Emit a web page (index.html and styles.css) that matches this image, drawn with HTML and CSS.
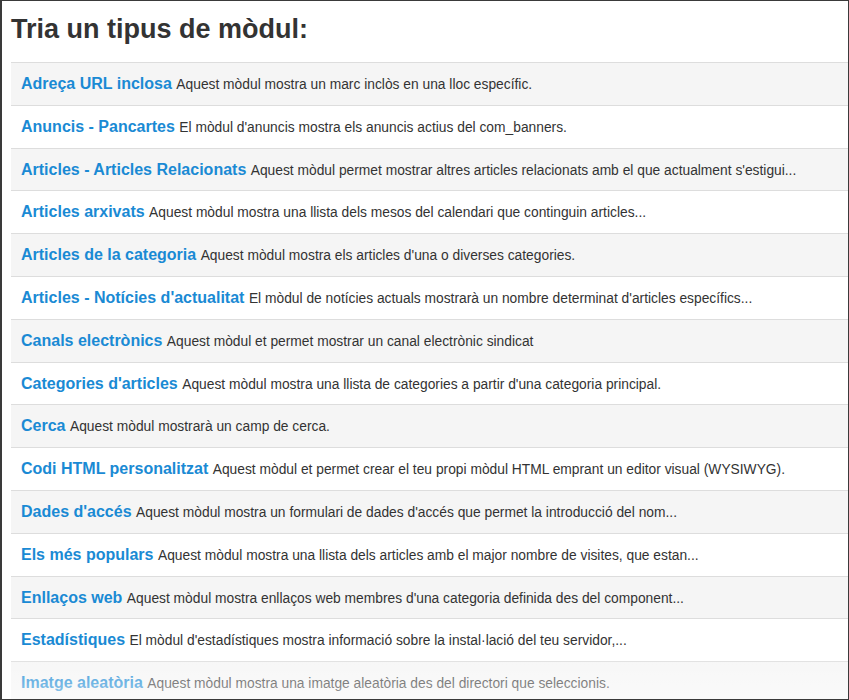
FILE: index.html
```html
<!DOCTYPE html>
<html lang="ca">
<head>
<meta charset="utf-8">
<title>Tria un tipus de mòdul</title>
<link rel="stylesheet" href="styles.css">
</head>
<body>
<div class="frame">
  <h2 class="title">Tria un tipus de mòdul:</h2>
  <ul class="modules">
    <li class="row"><a class="name" href="#">Adreça URL inclosa</a> <span class="desc">Aquest mòdul mostra un marc inclòs en una lloc específic.</span></li>
    <li class="row"><a class="name" href="#">Anuncis - Pancartes</a> <span class="desc">El mòdul d'anuncis mostra els anuncis actius del com_banners.</span></li>
    <li class="row"><a class="name" href="#">Articles - Articles Relacionats</a> <span class="desc">Aquest mòdul permet mostrar altres articles relacionats amb el que actualment s'estigui...</span></li>
    <li class="row"><a class="name" href="#">Articles arxivats</a> <span class="desc">Aquest mòdul mostra una llista dels mesos del calendari que continguin articles...</span></li>
    <li class="row"><a class="name" href="#">Articles de la categoria</a> <span class="desc">Aquest mòdul mostra els articles d'una o diverses categories.</span></li>
    <li class="row"><a class="name" href="#">Articles - Notícies d'actualitat</a> <span class="desc">El mòdul de notícies actuals mostrarà un nombre determinat d'articles específics...</span></li>
    <li class="row"><a class="name" href="#">Canals electrònics</a> <span class="desc">Aquest mòdul et permet mostrar un canal electrònic sindicat</span></li>
    <li class="row"><a class="name" href="#">Categories d'articles</a> <span class="desc">Aquest mòdul mostra una llista de categories a partir d'una categoria principal.</span></li>
    <li class="row"><a class="name" href="#">Cerca</a> <span class="desc">Aquest mòdul mostrarà un camp de cerca.</span></li>
    <li class="row"><a class="name" href="#">Codi HTML personalitzat</a> <span class="desc">Aquest mòdul et permet crear el teu propi mòdul HTML emprant un editor visual (WYSIWYG).</span></li>
    <li class="row"><a class="name" href="#">Dades d'accés</a> <span class="desc">Aquest mòdul mostra un formulari de dades d'accés que permet la introducció del nom...</span></li>
    <li class="row"><a class="name" href="#">Els més populars</a> <span class="desc">Aquest mòdul mostra una llista dels articles amb el major nombre de visites, que estan...</span></li>
    <li class="row"><a class="name" href="#">Enllaços web</a> <span class="desc">Aquest mòdul mostra enllaços web membres d'una categoria definida des del component...</span></li>
    <li class="row"><a class="name" href="#">Estadístiques</a> <span class="desc">El mòdul d'estadístiques mostra informació sobre la instal·lació del teu servidor,...</span></li>
    <li class="row"><a class="name" href="#">Imatge aleatòria</a> <span class="desc">Aquest mòdul mostra una imatge aleatòria des del directori que seleccionis.</span></li>
  </ul>
  <div class="fade"></div>
</div>
</body>
</html>
```
FILE: styles.css
```css
html, body {
  margin: 0;
  padding: 0;
  background: #fff;
}
body {
  font-family: "Liberation Sans", Arial, sans-serif;
  color: #333;
}
.frame {
  position: relative;
  box-sizing: border-box;
  width: 849px;
  height: 700px;
  border: 1px solid #3a3a3a;
  border-left-width: 2px;
  overflow: hidden;
  padding-left: 9px;
}
.title {
  margin: 13px 0 17px;
  font-size: 27px;
  line-height: 31px;
  font-weight: bold;
  color: #333;
}
.modules {
  list-style: none;
  margin: 0;
  padding: 0;
}
.row {
  border-top: 1px solid #dddddd;
  padding: 11px 10px;
  font-size: 16px;
  line-height: 19.8px;
  white-space: nowrap;
}
.row:nth-child(odd) {
  background: #f5f5f5;
}
.name {
  font-weight: bold;
  color: #1a8ad4;
  text-decoration: none;
}
.desc {
  font-size: 13.8px;
  line-height: 1;
  color: #333;
}
.fade {
  position: absolute;
  left: 0;
  right: 0;
  bottom: 0;
  height: 42px;
  background: linear-gradient(rgba(255,255,255,0.1), rgba(255,255,255,0.55));
}
```
